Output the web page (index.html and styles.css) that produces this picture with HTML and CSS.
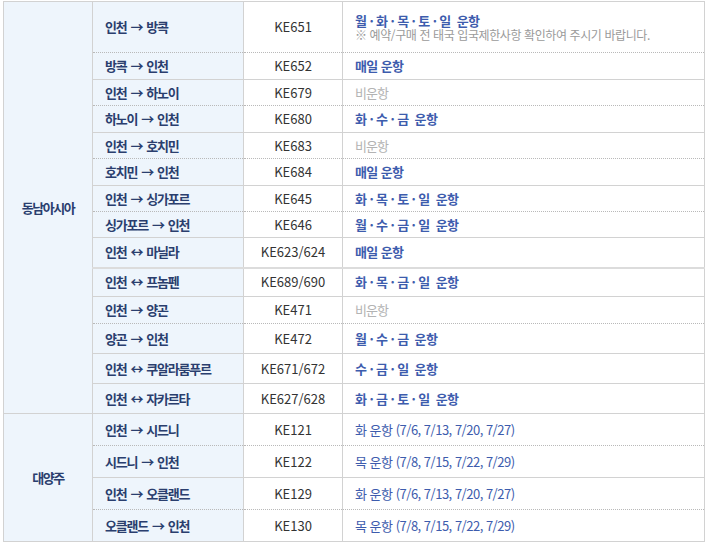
FILE: index.html
```html
<!DOCTYPE html>
<html lang="ko">
<head>
<meta charset="utf-8">
<title>운항 스케줄</title>
<link rel="stylesheet" href="styles.css">
</head>
<body>
<table class="sched">
  <colgroup>
    <col class="c-region">
    <col class="c-route">
    <col class="c-flight">
    <col class="c-days">
  </colgroup>
  <tbody>
    <tr class="r51 dot">
      <th class="region" rowspan="14">동남아시아</th>
      <td class="route">인천 → 방콕</td>
      <td class="flight">KE651</td>
      <td class="days"><span class="on">월 · 화 · 목 · 토 · 일&nbsp; 운항</span><span class="note">※ 예약/구매 전 태국 입국제한사항 확인하여 주시기 바랍니다.</span></td>
    </tr>
    <tr class="r27">
      <td class="route">방콕 → 인천</td>
      <td class="flight">KE652</td>
      <td class="days"><span class="on">매일 운항</span></td>
    </tr>
    <tr class="r26 dot">
      <td class="route">인천 → 하노이</td>
      <td class="flight">KE679</td>
      <td class="days"><span class="off">비운항</span></td>
    </tr>
    <tr class="r27">
      <td class="route">하노이 → 인천</td>
      <td class="flight">KE680</td>
      <td class="days"><span class="on">화 · 수 · 금&nbsp; 운항</span></td>
    </tr>
    <tr class="r26 dot">
      <td class="route">인천 → 호치민</td>
      <td class="flight">KE683</td>
      <td class="days"><span class="off">비운항</span></td>
    </tr>
    <tr class="r27">
      <td class="route">호치민 → 인천</td>
      <td class="flight">KE684</td>
      <td class="days"><span class="on">매일 운항</span></td>
    </tr>
    <tr class="r26 dot">
      <td class="route">인천 → 싱가포르</td>
      <td class="flight">KE645</td>
      <td class="days"><span class="on">화 · 목 · 토 · 일&nbsp; 운항</span></td>
    </tr>
    <tr class="r26">
      <td class="route">싱가포르 → 인천</td>
      <td class="flight">KE646</td>
      <td class="days"><span class="on">월 · 수 · 금 · 일&nbsp; 운항</span></td>
    </tr>
    <tr class="r30">
      <td class="route">인천 ↔ 마닐라</td>
      <td class="flight">KE623/624</td>
      <td class="days"><span class="on">매일 운항</span></td>
    </tr>
    <tr class="r29 dbl">
      <td class="route">인천 ↔ 프놈펜</td>
      <td class="flight">KE689/690</td>
      <td class="days"><span class="on">화 · 목 · 금 · 일&nbsp; 운항</span></td>
    </tr>
    <tr class="r27 dot">
      <td class="route">인천 → 양곤</td>
      <td class="flight">KE471</td>
      <td class="days"><span class="off">비운항</span></td>
    </tr>
    <tr class="r30">
      <td class="route">양곤 → 인천</td>
      <td class="flight">KE472</td>
      <td class="days"><span class="on">월 · 수 · 금&nbsp; 운항</span></td>
    </tr>
    <tr class="r30">
      <td class="route">인천 ↔ 쿠알라룸푸르</td>
      <td class="flight">KE671/672</td>
      <td class="days"><span class="on">수 · 금 · 일&nbsp; 운항</span></td>
    </tr>
    <tr class="r30">
      <td class="route">인천 ↔ 자카르타</td>
      <td class="flight">KE627/628</td>
      <td class="days"><span class="on">화 · 금 · 토 · 일&nbsp; 운항</span></td>
    </tr>
    <tr class="r32 dot">
      <th class="region" rowspan="4">대양주</th>
      <td class="route">인천 → 시드니</td>
      <td class="flight">KE121</td>
      <td class="days"><span class="plain">화 운항 (7/6, 7/13, 7/20, 7/27)</span></td>
    </tr>
    <tr class="r32">
      <td class="route">시드니 → 인천</td>
      <td class="flight">KE122</td>
      <td class="days"><span class="plain">목 운항 (7/8, 7/15, 7/22, 7/29)</span></td>
    </tr>
    <tr class="r32 dot">
      <td class="route">인천 → 오클랜드</td>
      <td class="flight">KE129</td>
      <td class="days"><span class="plain">화 운항 (7/6, 7/13, 7/20, 7/27)</span></td>
    </tr>
    <tr class="r32">
      <td class="route">오클랜드 → 인천</td>
      <td class="flight">KE130</td>
      <td class="days"><span class="plain">목 운항 (7/8, 7/15, 7/22, 7/29)</span></td>
    </tr>
  </tbody>
</table>
</body>
</html>
```

FILE: styles.css
```css
html, body {
  margin: 0;
  padding: 0;
  background: #ffffff;
}

body {
  padding: 1px 3px 0 3px;
  font-family: "Noto Sans CJK KR", "Noto Sans", sans-serif;
  font-size: 13px;
  color: #333333;
}

.sched {
  border-collapse: collapse;
  table-layout: fixed;
  width: 701px;
  border: 1px solid #cfcfcf;
}

.c-region { width: 89px; }
.c-route { width: 151px; }
.c-flight { width: 99px; }
.c-days { width: 362px; }

.sched th,
.sched td {
  border: 1px solid #d2d2d2;
  padding: 0 12px;
  vertical-align: middle;
  line-height: 14px;
  box-sizing: border-box;
  white-space: nowrap;
}

.sched tr.dot > td {
  border-bottom: 1px dotted #b9b9b9;
}

.sched tr.dot + tr > td {
  border-top: 1px dotted #b9b9b9;
}

.sched tr.dbl > td {
  border-top: 2px solid #dcdcdc;
}

.region {
  background: #eef5fc;
  color: #2a3e6e;
  font-weight: 700;
  text-align: center;
  letter-spacing: -1.5px;
}

.route {
  background: #eef5fc;
  color: #2a3e6e;
  font-weight: 700;
  letter-spacing: -1.2px;
  word-spacing: 1.5px;
}

.flight {
  text-align: center;
  color: #333333;
}

.days {
  color: #3d5cad;
}

.on {
  display: block;
  font-weight: 700;
  letter-spacing: -0.6px;
  color: #3d5cad;
}

.off {
  color: #b3b3b3;
  letter-spacing: -1px;
}

.plain {
  color: #3d5cad;
  letter-spacing: -0.5px;
}

.note {
  display: block;
  font-size: 12px;
  line-height: 13px;
  margin-top: 0;
  color: #9a9a9a;
  letter-spacing: -0.4px;
}

.r51 > td { height: 51px; }
.r27 > td { height: 27px; }
.r26 > td { height: 26px; }
.r29 > td { height: 29px; }
.r30 > td { height: 30px; }
.r32 > td { height: 32px; }
```
